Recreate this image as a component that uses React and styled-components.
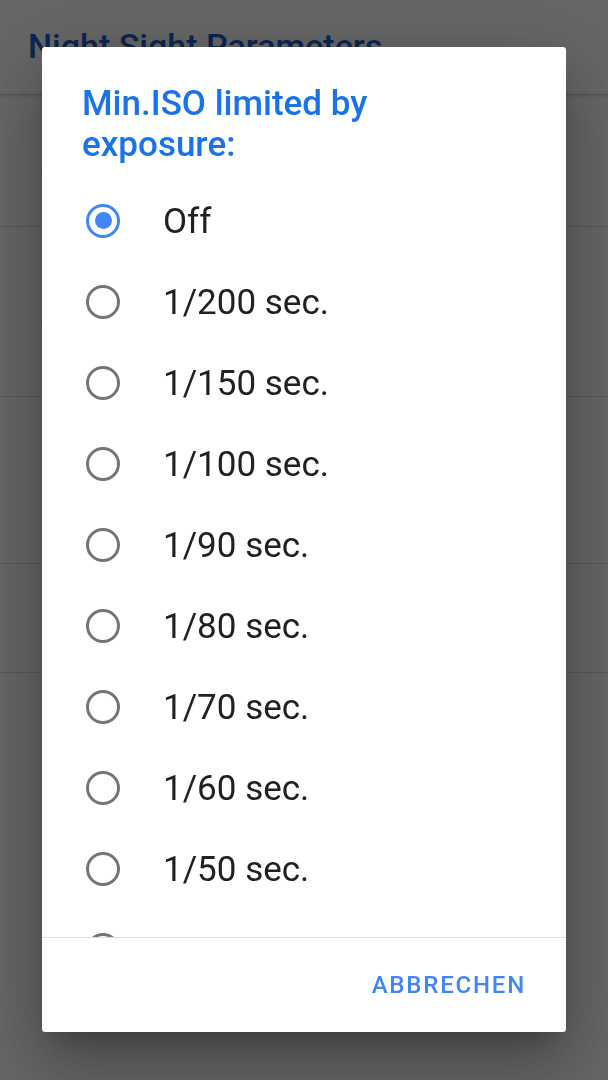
import React from 'react';
import styled, { createGlobalStyle } from 'styled-components';

const GlobalStyle = createGlobalStyle`
  html, body {
    margin: 0;
    padding: 0;
    background: #ffffff;
    font-family: Roboto, "Noto Sans", Arial, sans-serif;
  }
`;

// pagina por tras do dialogo
const Page = styled.div`
  width: 608px;
  height: 1080px;
  display: flex;
  flex-direction: column;
  background: #ffffff;
  overflow: hidden;
`;

const AppBar = styled.header`
  height: 95px;
  flex-shrink: 0;
  display: flex;
  align-items: flex-start;
  padding: 26px 0 0 28px;
  box-sizing: border-box;
  border-bottom: 1px solid #d6d6d6;
  box-shadow: 0 1px 3px rgba(0, 0, 0, 0.15);
`;

const AppTitle = styled.h1`
  margin: 0;
  font-size: 34px;
  font-weight: 500;
  line-height: 41px;
  color: #1e5fc8;
`;

const PrefRow = styled.div`
  height: ${(p) => p.h}px;
  flex-shrink: 0;
  display: flex;
  align-items: center;
  padding-left: 41px;
  box-sizing: border-box;
  border-bottom: 1px solid #dcdcdc;
  font-size: 30px;
  color: #222;
`;

const Scrim = styled.div`
  position: fixed;
  inset: 0;
  background: rgba(0, 0, 0, 0.6);
  display: flex;
  justify-content: center;
  align-items: flex-start;
  padding-top: 47px;
  box-sizing: border-box;
`;

const Dialog = styled.div`
  width: 524px;
  height: 985px;
  background: #ffffff;
  border-radius: 3px;
  display: flex;
  flex-direction: column;
  overflow: hidden;
  box-shadow: 0 18px 26px -12px rgba(0, 0, 0, 0.25),
    0 40px 64px 5px rgba(0, 0, 0, 0.16),
    0 15px 78px 14px rgba(0, 0, 0, 0.14);
`;

const Title = styled.h2`
  margin: 0;
  padding: 36px 0 0 40px;
  font-size: 35px;
  font-weight: 500;
  line-height: 41px;
  color: #1a73e8;
  width: 340px;
`;

const List = styled.div`
  flex: 1;
  overflow: hidden;
  padding-top: 15px;
  display: flex;
  flex-direction: column;
`;

const Option = styled.label`
  height: 81px;
  flex-shrink: 0;
  display: flex;
  align-items: center;
  padding-left: 44px;
  cursor: pointer;
`;

const Radio = styled.span`
  width: 34px;
  height: 34px;
  box-sizing: border-box;
  border-radius: 50%;
  border: 3.4px solid ${(p) => (p.checked ? '#4285f4' : '#757575')};
  display: flex;
  align-items: center;
  justify-content: center;
  flex-shrink: 0;

  &::after {
    content: '';
    width: 17px;
    height: 17px;
    border-radius: 50%;
    background: #4285f4;
    display: ${(p) => (p.checked ? 'block' : 'none')};
  }
`;

const OptionText = styled.span`
  margin-left: 43px;
  font-size: 35px;
  line-height: 41px;
  color: #212121;
  margin-top: 2px;
`;

const Footer = styled.div`
  height: 95px;
  flex-shrink: 0;
  border-top: 1px solid #e0e0e0;
  box-sizing: border-box;
  display: flex;
  align-items: center;
  justify-content: flex-end;
  padding-right: 40px;
`;

const TextButton = styled.button`
  background: none;
  border: none;
  padding: 0;
  font-family: Roboto, "Noto Sans", Arial, sans-serif;
  font-size: 24px;
  font-weight: 500;
  letter-spacing: 1.8px;
  color: #4285f4;
  cursor: pointer;
`;

const options = [
  'Off',
  '1/200 sec.',
  '1/150 sec.',
  '1/100 sec.',
  '1/90 sec.',
  '1/80 sec.',
  '1/70 sec.',
  '1/60 sec.',
  '1/50 sec.',
  '1/40 sec.',
  '1/30 sec.',
  '1/25 sec.',
];

class App extends React.Component {
  constructor() {
    super();
    this.state = { selected: 'Off' };
  }

  render() {
    const { selected } = this.state;
    return (
      <>
        <GlobalStyle />
        <Page>
          <AppBar>
            <AppTitle>Night Sight Parameters</AppTitle>
          </AppBar>
          <PrefRow h={ 132 }>Allow</PrefRow>
          <PrefRow h={ 170 }>Auto</PrefRow>
          <PrefRow h={ 167 }>Custom</PrefRow>
          <PrefRow h={ 109 } />
        </Page>
        <Scrim>
          <Dialog>
            <Title>Min.ISO limited by exposure:</Title>
            <List>
              {
                options.map((opt) => (
                  <Option key={ opt } onClick={ () => this.setState({ selected: opt }) }>
                    <Radio checked={ selected === opt } />
                    <OptionText>{ opt }</OptionText>
                  </Option>
                ))
              }
            </List>
            <Footer>
              <TextButton type="button">ABBRECHEN</TextButton>
            </Footer>
          </Dialog>
        </Scrim>
      </>
    );
  }
}

export default App;
